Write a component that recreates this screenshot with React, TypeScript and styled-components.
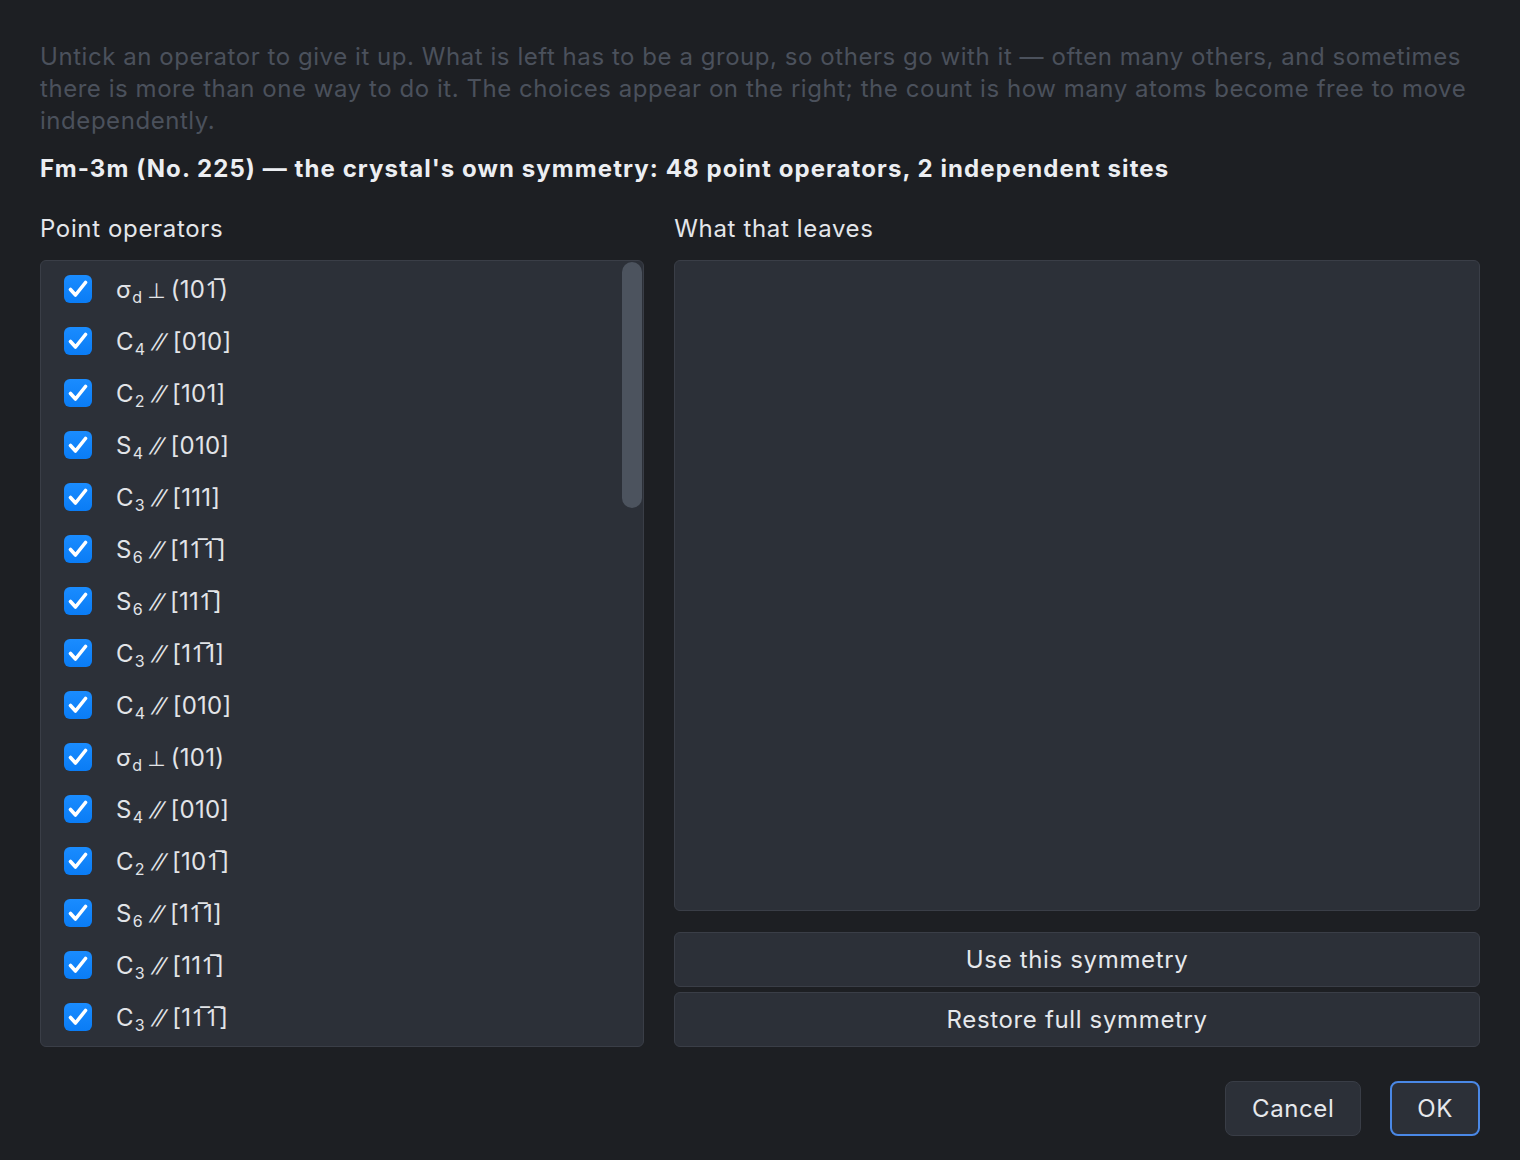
import React, { useLayoutEffect, useRef, useState } from "react";
import styled, { createGlobalStyle } from "styled-components";

const Global = createGlobalStyle`
  html, body { margin: 0; padding: 0; background: #1d1f23; }
  body { font-family: Inter, "Noto Sans", "Liberation Sans", sans-serif; -webkit-font-smoothing: antialiased; }
  * { box-sizing: border-box; }
`;

const Dialog = styled.div`
  width: 1520px;
  height: 1160px;
  background: #1d1f23;
  padding: 41px 40px 24px 40px;
  display: flex;
  flex-direction: column;
`;

const Intro = styled.p`
  margin: 0;
  font-size: 24px;
  line-height: 32px;
  letter-spacing: 0.55px;
  color: #4b515c;
`;

const Heading = styled.h2`
  margin: 16px 0 0 0;
  font-size: 24px;
  line-height: 32px;
  font-weight: 700;
  letter-spacing: 1.08px;
  color: #eceef2;
`;

const Columns = styled.div`
  margin-top: 28px;
  display: grid;
  grid-template-columns: 3fr 4fr;
  column-gap: 30px;
  flex: 1;
  min-height: 0;
`;

const Column = styled.div`
  display: flex;
  flex-direction: column;
  min-height: 0;
`;

const Label = styled.div`
  font-size: 24px;
  line-height: 32px;
  letter-spacing: 0.65px;
  color: #e4e6ea;
  margin-bottom: 15px;
`;

const ListPanel = styled.div`
  position: relative;
  height: 787px;
  background: #2c3038;
  border: 1px solid #3a3e47;
  border-radius: 6px;
  overflow: hidden;
`;

const Scroller = styled.div`
  height: 100%;
  padding: 3px 0;
  overflow-y: scroll;
  scrollbar-width: none;
  &::-webkit-scrollbar { display: none; }
`;

const Thumb = styled.div`
  position: absolute;
  right: 1px;
  width: 20px;
  border-radius: 10px;
  background: #4c535e;
`;

const Row = styled.label`
  height: 52px;
  display: flex;
  align-items: center;
  padding-left: 23px;
  gap: 24px;
  cursor: pointer;
`;

const Box = styled.span<{ $on: boolean }>`
  width: 28px;
  height: 28px;
  border-radius: 6px;
  background: ${(p) => (p.$on ? "linear-gradient(#1a8cff, #0a7cf5)" : "#3a3f48")};
  display: flex;
  align-items: center;
  justify-content: center;
  margin-top: -3px;
  flex: none;
`;

const OpText = styled.span`
  font-size: 24px;
  line-height: 28px;
  letter-spacing: 0.25px;
  color: #e2e4e8;
  white-space: nowrap;
  sub {
    font-size: 16px;
    vertical-align: -5px;
    line-height: 0;
    margin-left: 1px;
    margin-right: 5px;
  }
`;

const Rel = styled.span<{ $slant?: boolean }>`
  display: inline-block;
  font-family: "DejaVu Sans", sans-serif;
  font-size: ${(p) => (p.$slant ? "23px" : "21px")};
  font-weight: 400;
  transform: ${(p) => (p.$slant ? "scaleX(1.4) skewX(-8deg)" : "none")};
  margin: 0 ${(p) => (p.$slant ? "7px" : "5px")} 0 ${(p) => (p.$slant ? "5px" : "0")};
`;

const Result = styled.div`
  height: 651px;
  background: #2c3038;
  border: 1px solid #3a3e47;
  border-radius: 6px;
`;

const ActionStack = styled.div`
  margin-top: 21px;
  display: flex;
  flex-direction: column;
  gap: 5px;
`;

const WideButton = styled.button`
  height: 55px;
  background: #2c3038;
  border: 1px solid #3a3e47;
  border-radius: 6px;
  color: #e6e8ec;
  font-family: inherit;
  font-size: 24px;
  letter-spacing: 0.65px;
`;

const Footer = styled.div`
  margin-top: 33px;
  display: flex;
  justify-content: flex-end;
  gap: 29px;
`;

const FootButton = styled.button<{ $primary?: boolean }>`
  height: 55px;
  padding: 0 ${(p) => (p.$primary ? "25px" : "26px")};
  background: #2c3038;
  border: ${(p) => (p.$primary ? "2px solid #4a88e6" : "1px solid #393d46")};
  border-radius: 8px;
  color: #e6e8ec;
  font-family: inherit;
  font-size: 24px;
  letter-spacing: 0.6px;
`;

const B = "\u0305";

type Op = [string, string, string, string];
const ops: Op[] = [
  ["σ", "d", "⊥", `(101${B})`],
  ["C", "4", "⫽", "[010]"],
  ["C", "2", "⫽", "[101]"],
  ["S", "4", "⫽", "[010]"],
  ["C", "3", "⫽", "[111]"],
  ["S", "6", "⫽", `[11${B}1${B}]`],
  ["S", "6", "⫽", `[111${B}]`],
  ["C", "3", "⫽", `[11${B}1]`],
  ["C", "4", "⫽", "[010]"],
  ["σ", "d", "⊥", "(101)"],
  ["S", "4", "⫽", "[010]"],
  ["C", "2", "⫽", `[101${B}]`],
  ["S", "6", "⫽", `[11${B}1]`],
  ["C", "3", "⫽", `[111${B}]`],
  ["C", "3", "⫽", `[11${B}1${B}]`],
  ["C", "2", "⫽", "[110]"],
  ["σ", "h", "⊥", "(001)"],
  ["C", "4", "⫽", "[001]"],
  ["S", "4", "⫽", "[001]"],
  ["C", "2", "⫽", `[11${B}0]`],
  ["σ", "d", "⊥", `(11${B}0)`],
  ["C", "2", "⫽", "[011]"],
  ["σ", "d", "⊥", "(110)"],
  ["C", "4", "⫽", "[100]"],
  ["S", "4", "⫽", "[100]"],
  ["C", "2", "⫽", `[011${B}]`],
  ["σ", "h", "⊥", "(100)"],
  ["σ", "h", "⊥", "(010)"],
  ["C", "2", "⫽", "[100]"],
  ["C", "2", "⫽", "[001]"],
  ["S", "6", "⫽", "[111]"],
  ["C", "3", "⫽", `[1${B}11]`],
  ["S", "6", "⫽", `[1${B}11]`],
  ["σ", "d", "⊥", "(011)"],
  ["σ", "d", "⊥", `(011${B})`],
  ["C", "4", "⫽", "[100]"],
  ["S", "4", "⫽", "[100]"],
  ["C", "4", "⫽", "[001]"],
  ["S", "4", "⫽", "[001]"],
  ["C", "3", "⫽", `[1${B}1${B}1]`],
  ["S", "6", "⫽", `[1${B}1${B}1]`],
  ["C", "2", "⫽", `[1${B}10]`],
  ["C", "2", "⫽", `[01${B}1]`],
  ["σ", "d", "⊥", `(1${B}01)`],
  ["C", "2", "⫽", "[010]"],
  ["σ", "h", "⊥", "(001)"],
  ["i", "", "", ""],
  ["E", "", "", ""],
];

const Check = () => (
  <svg width="20" height="18" viewBox="0 0 20 18" fill="none">
    <path d="M2.5 9.5 L7.5 15 L17.5 2.5" stroke="#fff" strokeWidth="3.6" strokeLinecap="round" strokeLinejoin="round" />
  </svg>
);

export default function App() {
  const [checked, setChecked] = useState<boolean[]>(() => ops.map(() => true));
  const toggle = (i: number) => setChecked((c) => c.map((v, j) => (j === i ? !v : v)));
  const scrollRef = useRef<HTMLDivElement>(null);
  const [thumb, setThumb] = useState({ top: 1, height: 245 });

  const update = () => {
    const el = scrollRef.current;
    if (!el) return;
    const track = el.clientHeight - 2;
    const h = Math.max(30, (el.clientHeight / el.scrollHeight) * track);
    const max = el.scrollHeight - el.clientHeight;
    const top = 1 + (max > 0 ? (el.scrollTop / max) * (track - h) : 0);
    setThumb({ top, height: h });
  };

  useLayoutEffect(update, []);

  return (
    <>
      <Global />
      <Dialog>
        <Intro>
          Untick an operator to give it up. What is left has to be a group, so others go with it — often many others, and sometimes there is more than one way to do it. The choices appear on the right; the count is how many atoms become free to move independently.
        </Intro>
        <Heading>Fm-3m (No. 225) — the crystal's own symmetry: 48 point operators, 2 independent sites</Heading>
        <Columns>
          <Column>
            <Label>Point operators</Label>
            <ListPanel>
              <Scroller ref={scrollRef} onScroll={update}>
                {ops.map((op, i) => (
                  <Row key={i} onClick={() => toggle(i)}>
                    <Box $on={checked[i]}>{checked[i] && <Check />}</Box>
                    <OpText>
                      {op[0]}
                      {op[1] && <sub>{op[1]}</sub>}
                      {op[2] && <Rel $slant={op[2] === "⫽"}>{op[2]}</Rel>}
                      {op[3]}
                    </OpText>
                  </Row>
                ))}
              </Scroller>
              <Thumb style={{ top: thumb.top, height: thumb.height }} />
            </ListPanel>
          </Column>
          <Column>
            <Label>What that leaves</Label>
            <Result />
            <ActionStack>
              <WideButton>Use this symmetry</WideButton>
              <WideButton>Restore full symmetry</WideButton>
            </ActionStack>
          </Column>
        </Columns>
        <Footer>
          <FootButton>Cancel</FootButton>
          <FootButton $primary>OK</FootButton>
        </Footer>
      </Dialog>
    </>
  );
}
